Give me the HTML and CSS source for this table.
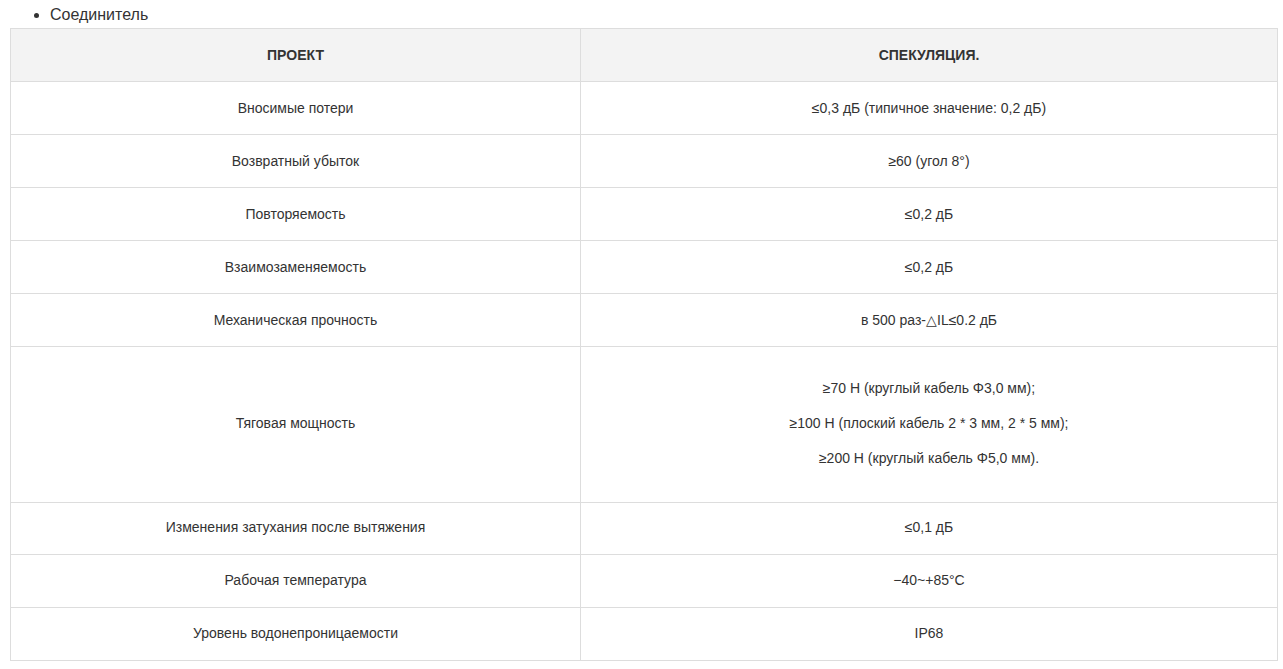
FILE: index.html
```html
<!DOCTYPE html>
<html lang="ru">
<head>
<meta charset="utf-8">
<link rel="stylesheet" href="styles.css">
</head>
<body>
<div class="page">
  <ul class="list">
    <li>Соединитель</li>
  </ul>
  <table class="spec">
    <thead>
      <tr><th class="col-a">ПРОЕКТ</th><th>СПЕКУЛЯЦИЯ.</th></tr>
    </thead>
    <tbody>
      <tr><td>Вносимые потери</td><td>≤0,3 дБ (типичное значение: 0,2 дБ)</td></tr>
      <tr><td>Возвратный убыток</td><td>≥60 (угол 8°)</td></tr>
      <tr><td>Повторяемость</td><td>≤0,2 дБ</td></tr>
      <tr><td>Взаимозаменяемость</td><td>≤0,2 дБ</td></tr>
      <tr><td>Механическая прочность</td><td>в 500 раз-△IL≤0.2 дБ</td></tr>
      <tr class="tall"><td>Тяговая мощность</td><td>
        <p>≥70 Н (круглый кабель Φ3,0 мм);</p>
        <p>≥100 Н (плоский кабель 2 * 3 мм, 2 * 5 мм);</p>
        <p>≥200 Н (круглый кабель Φ5,0 мм).</p>
      </td></tr>
      <tr class="short"><td>Изменения затухания после вытяжения</td><td>≤0,1 дБ</td></tr>
      <tr class="low"><td>Рабочая температура</td><td>−40~+85°C</td></tr>
      <tr class="low"><td>Уровень водонепроницаемости</td><td>IP68</td></tr>
    </tbody>
  </table>
</div>
</body>
</html>
```

FILE: styles.css
```css
html, body {
  margin: 0;
  padding: 0;
  background: #fff;
}
body {
  font-family: "Liberation Sans", Arial, sans-serif;
  color: #333;
}
.page {
  padding: 4px 0 0 10px;
}
.list {
  margin: 0;
  padding: 0 0 0 40px;
  font-size: 16px;
  line-height: 22px;
  height: 24px;
}
.list li {
  color: #333;
}
.spec {
  width: 1268px;
  border-collapse: collapse;
  table-layout: fixed;
  font-size: 14px;
  color: #333;
}
.spec th, .spec td {
  border: 1px solid #ddd;
  text-align: center;
  vertical-align: middle;
  padding: 16px 8px;
  line-height: 20px;
  height: 20px;
}
.spec .col-a {
  width: 553px;
}
.spec th {
  background: #f3f3f3;
  font-weight: bold;
  font-size: 14px;
  color: #333;
}
.spec .tall td {
  padding: 24px 8px 26px;
  line-height: 35px;
}
.spec .short td {
  padding: 14px 8px 17px;
}
.spec .low td {
  padding: 15px 8px 17px;
}
.spec .tall p {
  margin: 0;
}
```
